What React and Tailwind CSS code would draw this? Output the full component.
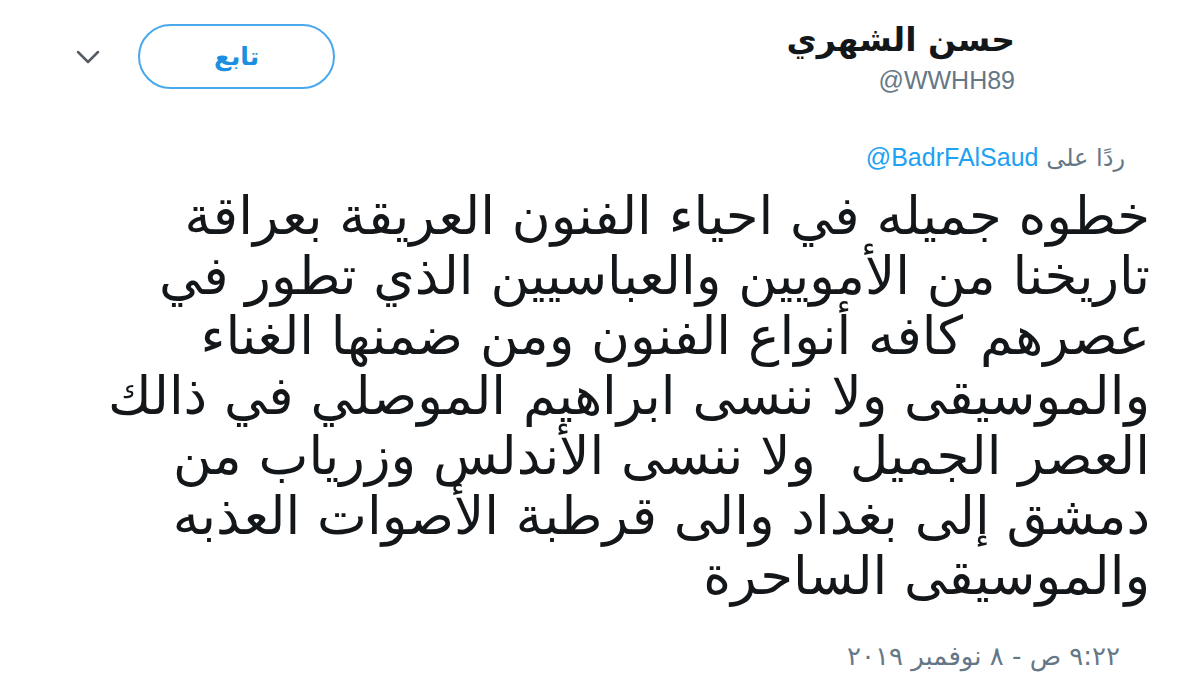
import React from 'react';

const lines = [
  'خطوه جميله في احياء الفنون العريقة بعراقة',
  'تاريخنا من الأمويين والعباسيين الذي تطور في',
  'عصرهم كافه أنواع الفنون ومن ضمنها الغناء',
  'والموسيقى ولا ننسى ابراهيم الموصلي في ذالك',
  'العصر الجميل  ولا ننسى الأندلس وزرياب من',
  'دمشق إلى بغداد والى قرطبة الأصوات العذبه',
  'والموسيقى الساحرة',
];

export default function App() {
  return (
    <div dir="rtl" className="w-[1200px] h-[683px] bg-white overflow-hidden font-['DejaVu_Sans',sans-serif] text-[#14171a]">
      {/* header */}
      <div className="flex justify-between items-start pt-[20px] pr-[185px] pl-[76px]">
        <div className="flex flex-col items-start">
          <div className="text-[33px] font-bold leading-[40px]">حسن الشهري</div>
          <div dir="ltr" className="text-[25px] leading-[30px] text-[#657786] font-['Liberation_Sans',sans-serif] mt-[5px]">@WWHH89</div>
        </div>
        <div className="flex items-center gap-[38px] pt-[4px]">
          <button className="w-[197px] h-[65px] rounded-full border-2 border-[#4aa8ec] text-[#1d8fe0] text-[25px] font-bold flex items-center justify-center">
            تابع
          </button>
          <svg width="24" height="14" viewBox="0 0 24 14" className="text-[#555c63]">
            <path d="M2 2l10 10 10-10" fill="none" stroke="currentColor" strokeWidth="2.5" strokeLinecap="round" strokeLinejoin="round" />
          </svg>
        </div>
      </div>

      {/* reply line */}
      <div className="pr-[75px] mt-[47px] text-[24px] leading-[30px] text-[#657786]">
        ردًا على <span dir="ltr" className="text-[#1da1f2] font-['Liberation_Sans',sans-serif] text-[25px]">@BadrFAlSaud</span>
      </div>

      {/* body */}
      <div className="pr-[50px] mt-[13px] text-[53px] leading-[60px]">
        {lines.map((l, i) => (
          <div key={i} className="whitespace-pre">{l}</div>
        ))}
      </div>

      {/* timestamp */}
      <div className="pr-[80px] mt-[35px] text-[26px] leading-[30px] text-[#657786]">
        ٩:٢٢ ص - ٨ نوفمبر ٢٠١٩
      </div>
    </div>
  );
}
